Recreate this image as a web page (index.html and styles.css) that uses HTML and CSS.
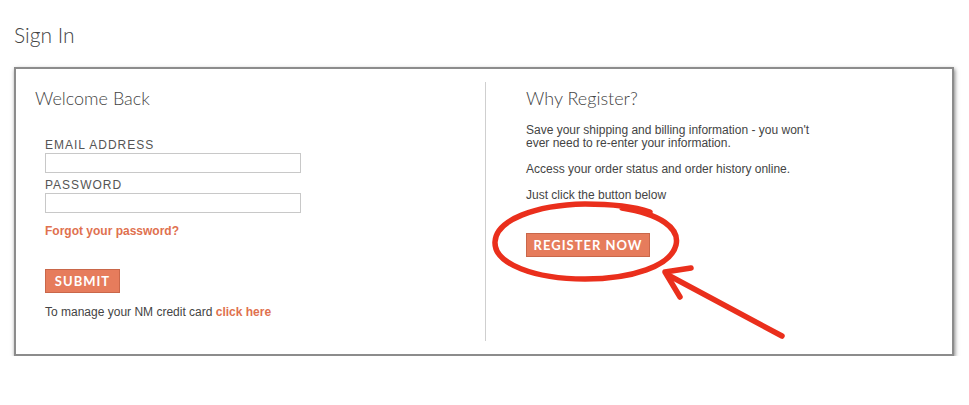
FILE: index.html
```html
<!DOCTYPE html>
<html lang="en">
<head>
    <meta charset="UTF-8">
    <title>Sign In</title>
    <link rel="stylesheet" href="styles.css">
</head>
<body>

<div class="page">
    <h1>Sign In</h1>

    <div class="signin-box">
        <!-- Colonna sinistra: login -->
        <div class="col col-login">
            <h2>Welcome Back</h2>
            <form class="login-form">
                <label for="email">EMAIL ADDRESS</label>
                <input type="text" id="email">
                <label for="password" class="label-pwd">PASSWORD</label>
                <input type="password" id="password">
                <a href="#" class="link forgot">Forgot your password?</a>
                <button type="button" class="btn btn-submit">SUBMIT</button>
                <p class="manage">To manage your NM credit card <a href="#" class="link">click here</a></p>
            </form>
        </div>

        <!-- Colonna destra: registrazione -->
        <div class="col col-register">
            <h2>Why Register?</h2>
            <p>Save your shipping and billing information - you won't<br>ever need to re-enter your information.</p>
            <p>Access your order status and order history online.</p>
            <p>Just click the button below</p>
            <button type="button" class="btn btn-register">REGISTER NOW</button>
        </div>
    </div>
</div>

<!-- Annotazione rossa sopra la pagina -->
<svg class="markup" width="969" height="405" viewBox="0 0 969 405">
    <path d="M 622 208 C 660 214, 680 228, 676 245 C 671 266, 632 279, 585 279 C 535 279, 494 264, 495 242 C 496 220, 535 205, 585 204 C 610 204, 632 206, 650 212"
          fill="none" stroke="#ea2f1c" stroke-width="5.5" stroke-linecap="round"/>
    <path d="M 782 336 L 668 275" fill="none" stroke="#ea2f1c" stroke-width="5.5" stroke-linecap="round"/>
    <path d="M 691 268 L 665 272 L 680 297" fill="none" stroke="#ea2f1c" stroke-width="5.5" stroke-linecap="round" stroke-linejoin="round"/>
</svg>

</body>
</html>
```

FILE: styles.css
```css
/* Stili generali */
body {
    margin: 0;
    background-color: #fff;
    font-family: 'Liberation Sans', Arial, sans-serif;
    color: #444;
}

.page {
    padding: 22px 0 0 14px;
    width: 940px;
}

h1 {
    font-family: 'Lato', sans-serif;
    font-weight: 300;
    font-size: 21px;
    line-height: 26px;
    color: #444;
    margin: 0 0 19px 0;
}

.signin-box {
    display: flex;
    height: 285px;
    border: 2px solid #8c8c8c;
    box-shadow: 1px 2px 4px rgba(0, 0, 0, 0.5);
}

h2 {
    font-family: 'Lato', sans-serif;
    font-weight: 300;
    font-size: 18px;
    line-height: 20px;
    color: #444;
    margin: 0;
}

.col-login {
    width: 450px;
    padding: 19px 0 0 19px;
}

.login-form {
    display: flex;
    flex-direction: column;
    align-items: flex-start;
    padding-left: 10px;
    margin-top: 30px;
}

label {
    font-size: 12px;
    line-height: 14px;
    letter-spacing: 1px;
    color: #555;
}

.label-pwd {
    margin-top: 5px;
}

input {
    width: 256px;
    height: 20px;
    box-sizing: border-box;
    border: 1px solid #c8c8c8;
    margin: 1px 0 0 0;
    padding: 0 4px;
}

.link {
    color: #e0714f;
    font-weight: 700;
    text-decoration: none;
}

.forgot {
    font-size: 12px;
    line-height: 14px;
    margin-top: 11px;
}

.btn {
    background-color: #e67c5c;
    border: 1px solid #c9674a;
    color: #fff;
    font-family: 'Lato', sans-serif;
    font-weight: 700;
    font-size: 13px;
    letter-spacing: 1px;
    height: 24px;
    padding: 0;
    cursor: pointer;
}

.btn-submit {
    width: 75px;
    margin-top: 31px;
}

.manage {
    font-size: 12px;
    line-height: 14px;
    margin: 12px 0 0 0;
}

.col-register {
    flex: 1;
    margin: 13px 0;
    border-left: 1px solid #cfcfcf;
    padding: 6px 0 0 40px;
}

.col-register p {
    font-size: 12px;
    line-height: 13px;
    margin: 13px 0 0 0;
}

.col-register h2 + p {
    margin-top: 16px;
}

.btn-register {
    width: 124px;
    margin-top: 31px;
}

/* Segno rosso */
.markup {
    position: absolute;
    top: 0;
    left: 0;
    pointer-events: none;
}
```
